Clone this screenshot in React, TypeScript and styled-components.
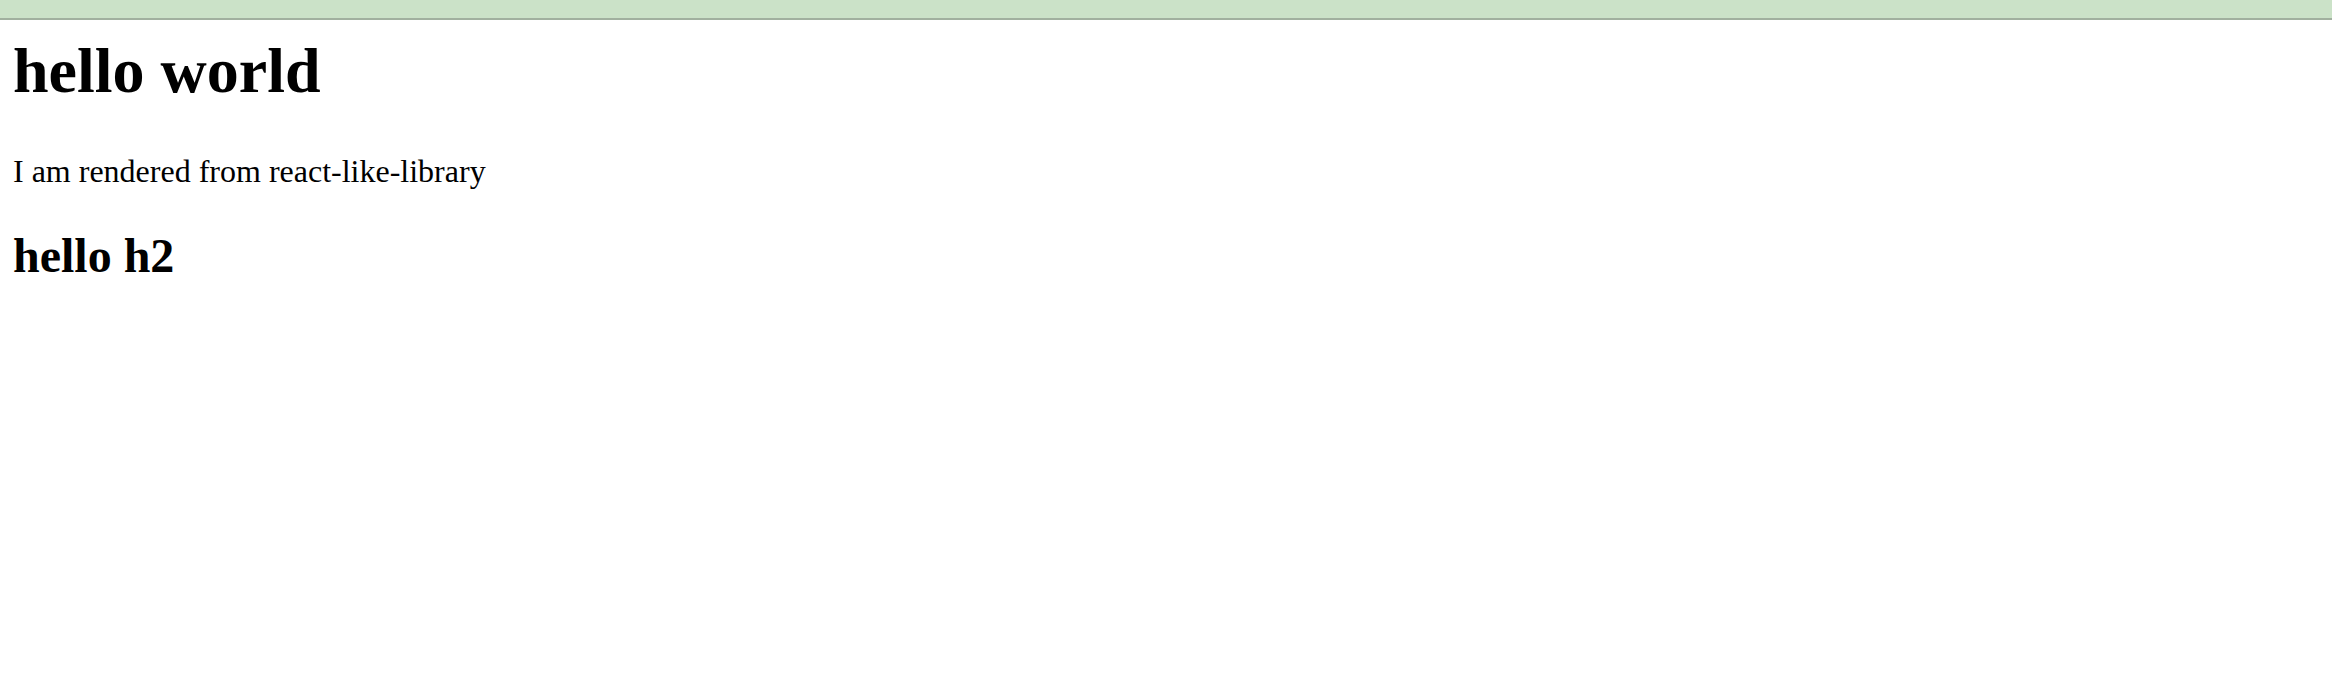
import React from 'react';
import styled, { createGlobalStyle } from 'styled-components';

const GlobalStyle = createGlobalStyle`
  html,
  body {
    margin: 0;
    padding: 0;
    background: #ffffff;
    color: #000000;
    font-family: 'Liberation Serif', 'Times New Roman', serif;
  }
`;

const TopBar = styled.div`
  height: 18px;
  background-color: #cbe2c8;
  border-bottom: 2px solid #a1b09f;
`;

const Content = styled.main`
  display: flex;
  flex-direction: column;
  align-items: flex-start;
  padding: 19px 14px 0 13px;
`;

const Title = styled.h1`
  margin: 0;
  font-size: 64px;
  line-height: 64px;
  font-weight: 700;
`;

const Text = styled.p`
  margin: 52px 0 0;
  font-size: 32px;
  line-height: 32px;
  font-weight: 400;
`;

const SubTitle = styled.h2`
  margin: 45px 0 0;
  font-size: 48px;
  line-height: 48px;
  font-weight: 700;
`;

export default function App() {
  return (
    <>
      <GlobalStyle />
      <TopBar />
      <Content>
        <Title>hello world</Title>
        <Text>I am rendered from react-like-library</Text>
        <SubTitle>hello h2</SubTitle>
      </Content>
    </>
  );
}
